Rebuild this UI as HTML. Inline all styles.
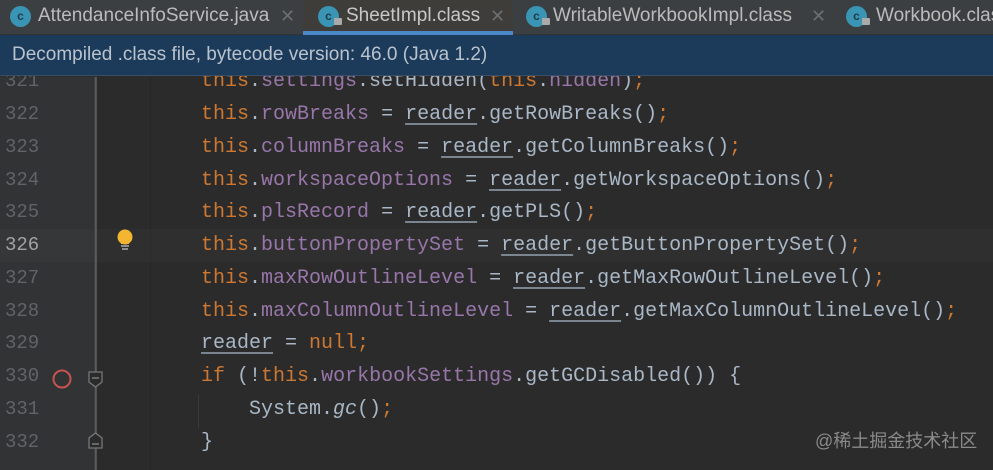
<!DOCTYPE html>
<html><head><meta charset="utf-8"><style>
*{margin:0;padding:0;box-sizing:border-box}
body{width:993px;height:470px;overflow:hidden;background:#2b2b2b;position:relative;font-family:"Liberation Sans",sans-serif}
.tabs{position:absolute;left:0;top:0;width:993px;height:35px;background:#3c3f41;border-bottom:1px solid #323232;z-index:5}
.tab{position:absolute;top:0;height:35px;font-size:19px;color:#bbbbbb;line-height:32px;white-space:nowrap}
.tab .ic{position:absolute;top:6px;width:21px;height:21px;border-radius:50%;background:#3a95b5;color:#1e3c4a;font-size:12px;line-height:21px;text-align:center;font-weight:bold}
.tab .lk{position:absolute;top:18px;width:8px;height:7px;background:#aaa;border-radius:1px}
.tab .x{position:absolute;color:#6b6e70;font-size:18px}
.active{background:#3e3d39}
.active:after{content:"";position:absolute;left:0;right:0;bottom:0;height:4px;background:#4a88c7}
.banner{position:absolute;left:0;top:35px;width:993px;height:41px;background:#1c3a5a;color:#b9c3cd;font-size:19px;line-height:40px;padding-left:12px;border-bottom:1px solid #3a4e66;z-index:5}
.g1{position:absolute;left:0;top:77px;width:95px;height:393px;background:#313335}
.g1b{position:absolute;left:95px;top:77px;width:2px;height:393px;background:#4d4f51}
.g2b{position:absolute;left:150px;top:77px;width:1px;height:393px;background:#262626}
.cur{position:absolute;left:0;top:229px;width:993px;height:33px;background:rgba(255,255,255,0.025)}
.ln{position:absolute;left:5px;font-family:"Liberation Mono",monospace;font-size:19px;color:#606468;line-height:33px}
.code{position:absolute;left:201px;font-family:"Liberation Mono",monospace;font-size:20px;color:#a9b7c6;line-height:33px;white-space:pre}
.k{color:#cc7832}.f{color:#9876aa}.u{text-decoration:underline;text-decoration-color:#7a8590;text-underline-offset:4px}.i{font-style:italic}
.wm{position:absolute;left:815px;top:427px;font-family:"Liberation Sans","Noto Sans CJK SC",sans-serif;font-size:18px;color:#8a8a8a}
</style></head><body>
<div class="tabs">
 <div class="tab" style="left:0;width:303px"><span class="ic" style="left:10px">c</span><span style="position:absolute;left:38px">AttendanceInfoService.java</span><span class="x" style="left:280px">✕</span></div>
 <div class="tab active" style="left:303px;width:210px"><span class="ic" style="left:15px">c</span><span class="lk" style="left:31px"></span><span style="position:absolute;left:43px;color:#c8c8c8">SheetImpl.class</span><span class="x" style="left:187px">✕</span></div>
 <div class="tab" style="left:513px;width:330px"><span class="ic" style="left:13px">c</span><span class="lk" style="left:29px"></span><span style="position:absolute;left:40px">WritableWorkbookImpl.class</span><span class="x" style="left:298px">✕</span></div>
 <div class="tab" style="left:843px;width:150px"><span class="ic" style="left:3px">c</span><span class="lk" style="left:19px"></span><span style="position:absolute;left:33px">Workbook.class</span></div>
</div>
<div class="banner">Decompiled .class file, bytecode version: 46.0 (Java 1.2)</div>
<div class="g1"></div><div class="g1b"></div><div class="g2b"></div>
<div class="cur"></div>
<div style="position:absolute;left:198px;top:395px;width:1px;height:33px;background:#3a3a3a"></div>
<div class="ln" style="top:65px">321</div>
<div class="ln" style="top:98px">322</div>
<div class="ln" style="top:131px">323</div>
<div class="ln" style="top:164px">324</div>
<div class="ln" style="top:196px">325</div>
<div class="ln" style="top:229px;color:#a4a3a3">326</div>
<div class="ln" style="top:262px">327</div>
<div class="ln" style="top:295px">328</div>
<div class="ln" style="top:327px">329</div>
<div class="ln" style="top:360px">330</div>
<div class="ln" style="top:393px">331</div>
<div class="ln" style="top:426px">332</div>
<svg style="position:absolute;left:0;top:0" width="993" height="470">
 <circle cx="62" cy="379" r="8.5" fill="none" stroke="#c75450" stroke-width="2"/>
 <line x1="95.5" y1="77" x2="95.5" y2="470" stroke="#5a5c5e" stroke-width="1.5"/>
 <path d="M89 372h13v10l-6.5 5l-6.5-5z" fill="#2b2b2b" stroke="#777" stroke-width="1.3"/>
 <line x1="92" y1="378" x2="99" y2="378" stroke="#888" stroke-width="1.3"/>
 <path d="M89 448h13v-10l-6.5-5l-6.5 5z" fill="#2b2b2b" stroke="#777" stroke-width="1.3"/>
 <line x1="92" y1="444" x2="99" y2="444" stroke="#888" stroke-width="1.3"/>
 <circle cx="125" cy="237" r="7.5" fill="#f4b630"/>
 <rect x="121" y="240" width="8" height="4" fill="#f4b630"/>
 <line x1="121" y1="246" x2="129" y2="246" stroke="#ccc" stroke-width="1.2"/>
 <line x1="122" y1="249" x2="128" y2="249" stroke="#ccc" stroke-width="1.2"/>
</svg>
<div class="code" style="top:65px"><span class="k">this</span>.<span class="f">settings</span>.setHidden(<span class="k">this</span>.<span class="f">hidden</span>)<span class="k">;</span></div>
<div class="code" style="top:98px"><span class="k">this</span>.<span class="f">rowBreaks</span> = <span class="u">reader</span>.getRowBreaks()<span class="k">;</span></div>
<div class="code" style="top:131px"><span class="k">this</span>.<span class="f">columnBreaks</span> = <span class="u">reader</span>.getColumnBreaks()<span class="k">;</span></div>
<div class="code" style="top:164px"><span class="k">this</span>.<span class="f">workspaceOptions</span> = <span class="u">reader</span>.getWorkspaceOptions()<span class="k">;</span></div>
<div class="code" style="top:196px"><span class="k">this</span>.<span class="f">plsRecord</span> = <span class="u">reader</span>.getPLS()<span class="k">;</span></div>
<div class="code" style="top:229px"><span class="k">this</span>.<span class="f">buttonPropertySet</span> = <span class="u">reader</span>.getButtonPropertySet()<span class="k">;</span></div>
<div class="code" style="top:262px"><span class="k">this</span>.<span class="f">maxRowOutlineLevel</span> = <span class="u">reader</span>.getMaxRowOutlineLevel()<span class="k">;</span></div>
<div class="code" style="top:295px"><span class="k">this</span>.<span class="f">maxColumnOutlineLevel</span> = <span class="u">reader</span>.getMaxColumnOutlineLevel()<span class="k">;</span></div>
<div class="code" style="top:327px"><span class="u">reader</span> = <span class="k">null;</span></div>
<div class="code" style="top:360px"><span class="k">if</span> (!<span class="k">this</span>.<span class="f">workbookSettings</span>.getGCDisabled()) {</div>
<div class="code" style="top:393px">    System.<span class="i">gc</span>()<span class="k">;</span></div>
<div class="code" style="top:426px">}</div>
<div class="wm">@稀土掘金技术社区</div>
</body></html>
